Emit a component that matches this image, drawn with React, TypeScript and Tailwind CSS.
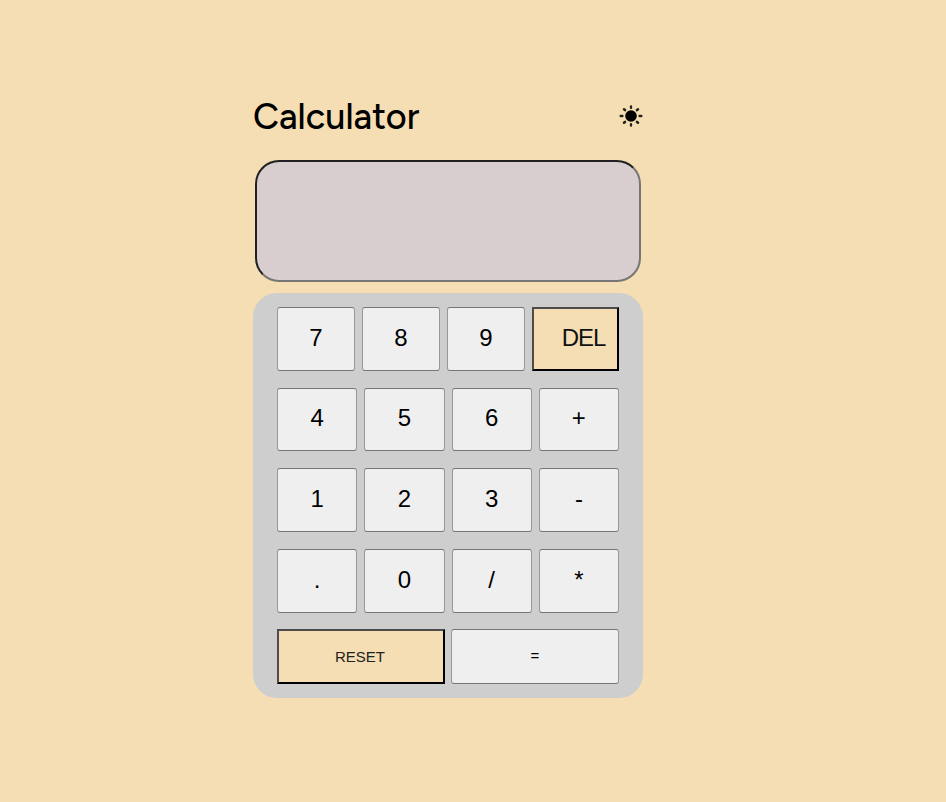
import React from "react";

const keyBase =
  "h-full rounded-[3px] border border-x-[#979797] border-y-[#767676] bg-[#efefef] text-center text-black";

function Key({ label, className = "flex-1 pb-[2px] text-[24px]" }: { label: string; className?: string }) {
  return <button className={`${keyBase} ${className}`}>{label}</button>;
}

function Sun() {
  return (
    <svg className="mb-[2px] h-6 w-6" viewBox="0 0 24 24" fill="none" stroke="#000" strokeWidth="2.3" strokeLinecap="round">
      <circle cx="12" cy="12" r="5.8" fill="#000" stroke="none" />
      <g strokeOpacity="0.85">
        <path d="M12 2.3v1.6M12 20.1v1.6M1.6 12h1.9M20.5 12h1.9" />
        <path d="M5 5.3l1 .8M18 17.9l1 .8M5 18.7l1-.8M18 6.1l1-.8" strokeWidth="2.6" />
      </g>
    </svg>
  );
}

const rows = [
  ["4", "5", "6", "+"],
  ["1", "2", "3", "-"],
  [".", "0", "/", "*"],
];

export default function App() {
  return (
    <main className="flex h-[802px] justify-center overflow-hidden bg-[#f5deb3] pr-[50px] pt-[93px] font-['Liberation_Sans',Arial,sans-serif]">
      <div className="w-[390px]">
        <header className="flex h-[47px] items-center justify-between">
          <h1 className="whitespace-nowrap pt-px font-['Figtree','Lato',sans-serif] text-[36px] font-medium leading-[46px]">
            Calculator
          </h1>
          <Sun />
        </header>
        <div className="ml-[2px] mr-[2px] mt-5 h-[122px] rounded-[24px] border-2 border-b-[#767676] border-l-[#212121] border-r-[#767676] border-t-[#212121] bg-[#d8cecf]" />
        <section className="mt-[11px] h-[405px] rounded-[24px] bg-[#cecece] px-6 pt-[14px]">
          <div className="flex h-16 gap-[7px]">
            <Key label="7" />
            <Key label="8" />
            <Key label="9" />
            <button className="w-[87px] border-2 border-b-black border-l-[#4c4c4c] border-r-black border-t-[#4c4c4c] bg-[#f5deb3] pb-[2px] pl-[16px] text-[24px] tracking-[-1px] text-[#111]">
              DEL
            </button>
          </div>
          <div className="mt-[17px] flex flex-col gap-[17px]">
            {rows.map((row, index) => (
              <div key={index} className="flex h-16 gap-[7px] first:h-[63px]">
                {row.map((label) => (
                  <Key key={label} label={label} className={index === 0 ? "flex-1 pb-[3px] text-[24px]" : undefined} />
                ))}
              </div>
            ))}
          </div>
          <div className="mt-4 flex h-[55px] gap-[6px]">
            <button className="w-[168px] border-2 border-b-black border-l-[#4c4c4c] border-r-black border-t-[#4c4c4c] bg-[#f5deb3] pr-[2px] pt-px text-[15px] text-[#222]">
              RESET
            </button>
            <Key label="=" className="flex-1 text-[15px]" />
          </div>
        </section>
      </div>
    </main>
  );
}
